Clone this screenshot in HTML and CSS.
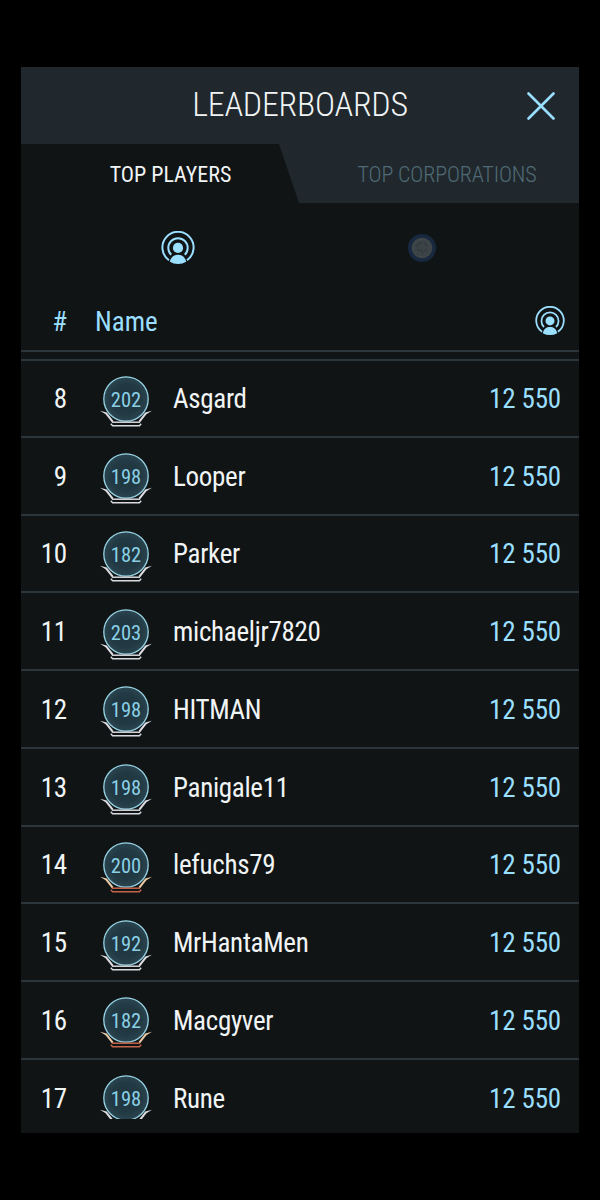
FILE: index.html
```html
<!DOCTYPE html>
<html lang="en">
<head>
<meta charset="utf-8">
<title>Leaderboards</title>
<link rel="stylesheet" href="styles.css">
</head>
<body>
<svg class="defs" aria-hidden="true">
  <defs>
    <radialGradient id="disc"><stop offset="0" stop-color="#1f343d"/><stop offset="0.7" stop-color="#223a44"/><stop offset="1" stop-color="#2b4651"/></radialGradient>
  </defs>
  <symbol id="influence" viewBox="0 0 34 34">
    <path d="M8 29.2A15.6 15.6 0 1 1 26 29.2M10.2 23.8A9.7 9.7 0 1 1 23.8 23.8" fill="none" stroke="#9bdfff" stroke-width="2"/>
    <circle cx="17" cy="16.900" r="5.100" fill="#9bdfff"/>
    <path d="M8.800 30.800C10 26 12.800 23.800 17 23.800S24 26 25.200 30.800Q21.500 33 17 33T8.800 30.800Z" fill="#9bdfff"/>
  </symbol>
  <symbol id="badge" viewBox="0 0 56 54">
    <circle cx="28" cy="25" r="22.200" fill="url(#disc)" stroke="#97d3e4" stroke-width="1.300"/>
    <path d="M2 36.800L8.800 38.400L15.300 46.800L14.200 48.800L7.600 40.300ZM54 36.800L47.200 38.400L40.700 46.800L41.800 48.800L48.400 40.300Z" fill="var(--wing)"/>
    <path d="M14 48.200H42" stroke="var(--base)" stroke-width="1.500"/>
    <path d="M12.800 49.800L14.600 51.800H41.400L43.200 49.800" fill="none" stroke="var(--base)" stroke-width="1.400"/>
  </symbol>
</svg>
<main class="panel">
  <header class="header">
    <h1 class="title">LEADERBOARDS</h1>
    <svg class="close" viewBox="0 0 28 28"><path d="M1.500 1.500L26.500 26.500M26.500 1.500L1.500 26.500" stroke="#9bdfff" stroke-width="2.600" stroke-linecap="round"/></svg>
  </header>
  <nav class="tabs">
    <div class="tab active">TOP PLAYERS</div>
    <div class="tab">TOP CORPORATIONS</div>
  </nav>
  <div class="filters">
    <svg class="filter-influence"><use href="#influence"/></svg>
    <svg class="filter-coin" viewBox="0 0 30 30"><circle cx="15" cy="15" r="12.300" fill="#343c40" stroke="#17283f" stroke-width="3.600"/><circle cx="15" cy="15" r="9.200" fill="#3b4347" stroke="#454d51"/><path d="M9.500 14L12 10.500L15 9.500M17 10L20.500 13M10 17H14L16 20M17 17L20 18" fill="none" stroke="#30373a" stroke-width="1.200"/></svg>
  </div>
  <div class="columns">
    <span class="col-rank">#</span>
    <span class="col-name">Name</span>
    <svg class="col-icon"><use href="#influence"/></svg>
  </div>
  <div class="list" id="list"></div>
</main>
<script src="app.js"></script>
</body>
</html>
```
FILE: styles.css
```css
* { box-sizing: border-box; }
body { margin: 0; height: 1200px; padding: 67px 21px; background: #000; font-family: "Roboto Condensed", Roboto, sans-serif; font-stretch: 75%; overflow: hidden; }
.defs { position: absolute; width: 0; height: 0; }
.panel { height: 1066px; background: #101415; color: #f1f4f5; }
.header { height: 77px; background: #20282d; display: grid; grid-template-columns: 76px 1fr 76px; align-items: center; justify-items: center; }
.title { grid-column: 2; margin: 0; padding-bottom: 3px; font-size: 34px; line-height: 40px; font-weight: 300; letter-spacing: -0.25px; white-space: nowrap; }
.close { width: 28px; height: 28px; }
.tabs { height: 59px; display: grid; grid-template-columns: 278px 280px; background: #20282d; }
.tab { display: flex; align-items: center; justify-content: center; font-size: 22px; font-weight: 300; letter-spacing: -0.12px; color: #506b76; white-space: nowrap; padding: 2px 0 0 16px; }
.tab.active { color: #f1f4f5; font-weight: 400; letter-spacing: 0; padding-left: 21px; background: #101415; clip-path: polygon(0 0, 258px 0, 278px 100%, 0 100%); }
.filters { height: 90px; display: grid; grid-template-columns: 314px 174px; justify-items: center; align-items: center; }
.filter-influence { width: 34px; height: 34px; }
.filter-coin { width: 30px; height: 30px; }
.columns { height: 59px; display: grid; grid-template-columns: 46px 1fr 44px; align-items: center; font-size: 27px; color: #9bdfff; border-bottom: 2px solid #2b373c; }
.col-rank { text-align: right; }
.col-name { padding-left: 28px; }
.col-icon { width: 30px; height: 30px; margin-bottom: 2px; }
.list { height: 760px; margin-top: 7px; border-top: 2px solid #2b373c; overflow: hidden; }
.row { height: 77.75px; border-bottom: 2px solid #2b373c; display: grid; grid-template-columns: 46px 119px 1fr auto; align-items: center; padding-right: 18px; font-size: 27px; letter-spacing: -0.15px; --wing: #dcdce2; --base: #d9d9df; }
.row:first-child { height: 76.75px; }
.row.bronze { --wing: #e8c9a6; --base: #c4644a; }
.rank { text-align: right; }
.rank, .name, .score { padding-top: 2px; }
.badge { display: grid; width: 56px; height: 54px; margin: 5px 0 0 31px; place-items: center; }
.badge svg, .badge span { grid-area: 1 / 1; }
.badge svg { width: 56px; height: 54px; }
.badge span { font-size: 20.5px; line-height: 24px; color: #8bd0e5; margin-bottom: 2px; letter-spacing: 0; }
.name { margin-left: -13px; letter-spacing: -0.3px; }
.score { color: #9bdfff; }
```
FILE: app.js
```js
const rows = [[8,202,"Asgard"],[9,198,"Looper"],[10,182,"Parker"],[11,203,"michaeljr7820"],[12,198,"HITMAN"],[13,198,"Panigale11"],[14,200,"lefuchs79",1],[15,192,"MrHantaMen"],[16,182,"Macgyver",1],[17,198,"Rune"]];
document.getElementById("list").innerHTML = rows.map(([rank, level, name, bronze]) => `
  <div class="row${bronze ? " bronze" : ""}">
    <span class="rank">${rank}</span>
    <div class="badge"><svg><use href="#badge"/></svg><span>${level}</span></div>
    <span class="name">${name}</span>
    <span class="score">12 550</span>
  </div>`).join("");
```
